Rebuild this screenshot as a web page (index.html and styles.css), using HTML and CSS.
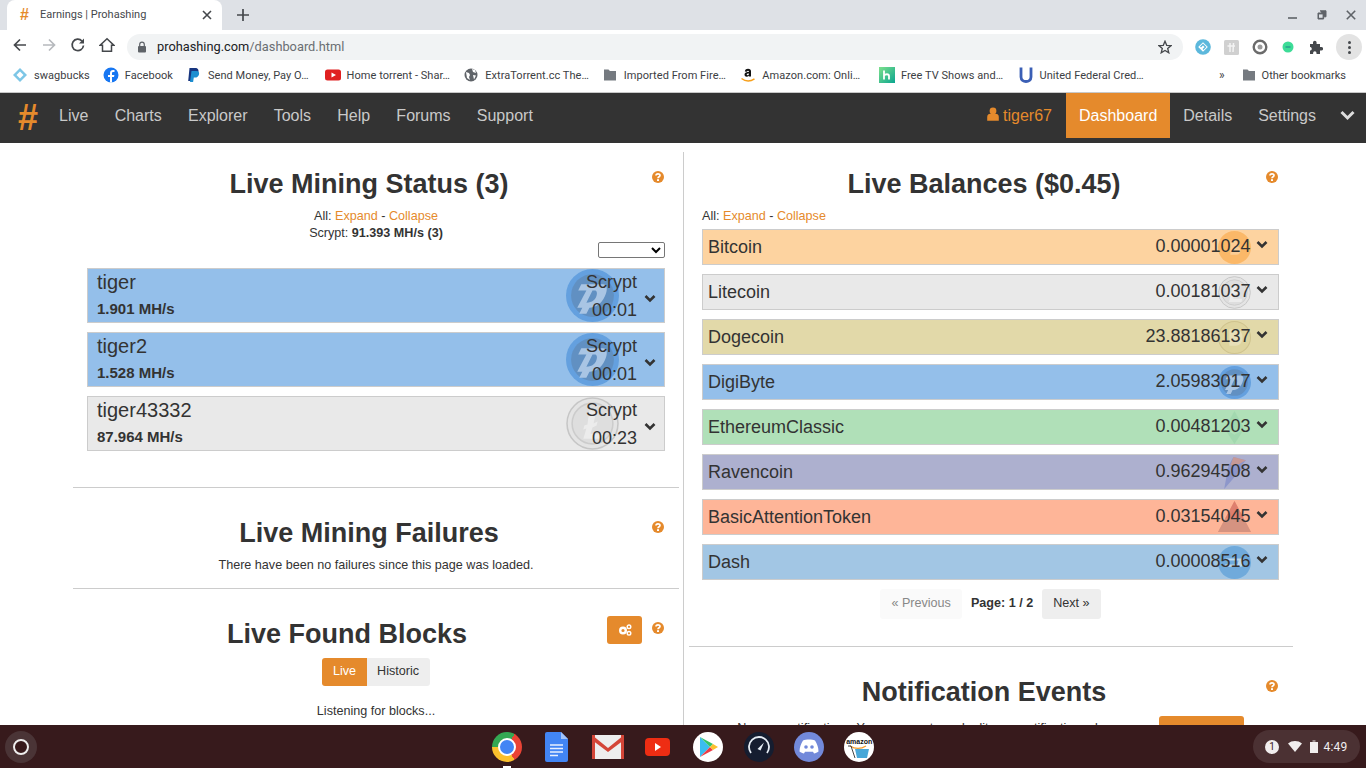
FILE: index.html
```html
<!DOCTYPE html>
<html lang="en">
<head>
<meta charset="utf-8">
<title>Earnings | Prohashing</title>
<link rel="stylesheet" href="styles.css">
</head>
<body>
<svg class="defs" width="0" height="0" aria-hidden="true">
  <symbol id="help" viewBox="0 0 12 12"><circle cx="6" cy="6" r="6" fill="#e58a2c"/><path d="M4 4.600C4 2.400 8 2.400 8 4.400 8 5.800 6 5.600 6 7.200" fill="none" stroke="#fff" stroke-width="1.700"/><rect x="5" y="8.200" width="2" height="1.800" fill="#fff"/></symbol>
  <symbol id="chev" viewBox="0 0 12 9"><path d="M1.500 2 6 6.500 10.500 2" fill="none" stroke="#333" stroke-width="2.600"/></symbol>
  <symbol id="dgb" viewBox="0 0 52 52"><circle cx="26" cy="26" r="26" fill="#3d86d6" fill-opacity=".55"/><circle cx="26" cy="26" r="21" fill="#5d7fa6" fill-opacity=".5"/><path d="M15 15h21c5 0 5 6 2 12-3 7-9 11-15 11l-3 6h-7l3-6h-5l9-17h6l-6 12c6 0 9-3 10-7 1-3 0-5-2-5H12z" fill="#c8dcf2" fill-opacity=".7"/></symbol>
  <symbol id="ltc" viewBox="0 0 52 52"><circle cx="26" cy="26" r="25" fill="#e4e4e4" stroke="#c6c6c6" stroke-width="1.500"/><circle cx="26" cy="26" r="20" fill="#dedede" stroke="#cccccc" stroke-width="1.500"/><path d="M23 13h7l-3 13 4-2-1 4-4 2-2 6h14l-1 5H17l3-10-3 1 1-4 3-1z" fill="#ececec"/></symbol>
  <symbol id="file" viewBox="0 0 16 16"><path d="M2 2.500h4.500L8 4h6v9.500H2z" fill="#757a80"/></symbol>
</svg>

<header class="tabstrip">
  <div class="tab">
    <span class="tab-fav">#</span>
    <span class="tab-title">Earnings | Prohashing</span>
    <svg class="tab-x" width="10" height="10" viewBox="0 0 10 10"><path d="M1 1l8 8M9 1l-8 8" stroke="#45484c" stroke-width="1.600"/></svg>
  </div>
  <svg class="newtab" width="12" height="12" viewBox="0 0 12 12"><path d="M6 0v12M0 6h12" stroke="#45484c" stroke-width="1.700"/></svg>
  <div class="winctl">
    <svg width="10" height="10" viewBox="0 0 10 10"><path d="M0 8h9" stroke="#5f6368" stroke-width="1.600"/></svg>
    <svg width="10" height="10" viewBox="0 0 10 10"><path d="M3 .8h6v6H7M1 3h5.600v6H1z" fill="#5f6368" stroke="#5f6368"/><rect x="2" y="4.400" width="3.600" height="3.400" fill="#dee1e6"/></svg>
    <svg width="10" height="10" viewBox="0 0 10 10"><path d="M.8.8l8.400 8.400M9.200.8L.8 9.200" stroke="#5f6368" stroke-width="1.600"/></svg>
  </div>
</header>

<div class="toolbar">
  <svg class="tb-ic" width="16" height="16" viewBox="0 0 16 16"><path d="M14 8H3M8 2.500 2.500 8 8 13.500" fill="none" stroke="#45484c" stroke-width="1.700"/></svg>
  <svg class="tb-ic" width="16" height="16" viewBox="0 0 16 16"><path d="M2 8h11M8 2.500 13.500 8 8 13.500" fill="none" stroke="#b6b9bd" stroke-width="1.700"/></svg>
  <svg class="tb-ic" width="16" height="16" viewBox="0 0 16 16"><path d="M13.500 8.500A5.700 5.700 0 1 1 12 4" fill="none" stroke="#45484c" stroke-width="1.700"/><path d="M14 1.500v5h-5z" fill="#45484c"/></svg>
  <svg class="tb-ic" width="16" height="16" viewBox="0 0 16 16"><path d="M8 1.800 1.200 8.200h2.300v6h9v-6h2.300z" fill="none" stroke="#45484c" stroke-width="1.500"/></svg>
  <div class="omnibox">
    <svg width="10" height="12" viewBox="0 0 10 12"><path d="M2.700 5V3.500a2.300 2.300 0 0 1 4.600 0V5" fill="none" stroke="#5f6368" stroke-width="1.200"/><rect x="1" y="5" width="8" height="6.500" rx="1" fill="#5f6368"/></svg>
    <span class="url"><span class="url-host">prohashing.com</span>/dashboard.html</span>
    <svg class="star" width="14" height="14" viewBox="0 0 14 14"><path d="M7 1.200 8.700 5.300l4.400.3-3.400 2.900 1.100 4.300L7 10.500l-3.800 2.300 1.100-4.300L.9 5.600l4.400-.3z" fill="none" stroke="#45484c" stroke-width="1.300"/></svg>
  </div>
  <div class="exts">
    <svg width="16" height="16" viewBox="0 0 16 16"><circle cx="8" cy="8" r="7.800" fill="#5cb8dc"/><path d="M8 3.200l4.800 4.800L8 12.800 3.200 8z" fill="#fff"/><path d="M5.500 8L8 5.500 10.500 8 8 10.500" fill="none" stroke="#5cb8dc" stroke-width="1.400"/></svg>
    <svg width="15" height="15" viewBox="0 0 15 15"><rect width="15" height="15" rx="1.500" fill="#d0d0d0"/><path d="M6 3v9M3.500 6H11M9.500 3 9 12" stroke="#f4f4f4" stroke-width="1.500" fill="none"/></svg>
    <svg width="16" height="16" viewBox="0 0 16 16"><circle cx="8" cy="8" r="6.300" fill="none" stroke="#6b6b6b" stroke-width="2.400"/><circle cx="8" cy="8" r="2.500" fill="#9a9a9a"/></svg>
    <svg width="12" height="12" viewBox="0 0 12 12"><circle cx="6" cy="6" r="5.500" fill="#3ddc97"/><path d="M3.500 6h5" stroke="#2a9d8f" stroke-width="1.500"/></svg>
    <svg width="14" height="14" viewBox="0 0 14 14"><path d="M1 4h3V2.500a1.800 1.800 0 0 1 3.600 0V4h3.400v3h1.300a1.800 1.800 0 0 1 0 3.600H11V14H7.500v-1a1.700 1.700 0 0 0-3.400 0v1H1v-3.400h.5a1.900 1.900 0 0 0 0-3.600H1z" fill="#45484c"/></svg>
    <span class="menu-btn"><i></i><i></i><i></i></span>
  </div>
</div>

<nav class="bookmarks">
  <a class="bm"><svg width="16" height="16" viewBox="0 0 16 16"><path d="M8 1l7 7-7 7-7-7z" fill="#7dc6e6"/><path d="M8 4.500 11.500 8 8 11.500 4.500 8z" fill="#fff"/></svg><span>swagbucks</span></a>
  <a class="bm"><svg width="16" height="16" viewBox="0 0 16 16"><circle cx="8" cy="8" r="7.500" fill="#1877f2"/><path d="M7 15.500V10H5V8h2V6c0-2 1.200-3 3-3h1.500v2H10.300C9.500 5 9 5.400 9 6.200V8h2.400L11 10H9v5.500z" fill="#fff"/></svg><span>Facebook</span></a>
  <a class="bm"><svg width="16" height="16" viewBox="0 0 16 16"><path d="M3.500 1H9c3 0 4 2 3.300 4.200C11.700 7.400 10 8.500 8 8.500H6.500L5.700 14H2.200z" fill="#17357f"/><path d="M5.500 4h5c2.200 0 3 1.400 2.500 3.400C12.500 9.400 11 10.500 9 10.500H7.800L7.100 15H4z" fill="#1c8ed0"/></svg><span class="trunc">Send Money, Pay O…</span></a>
  <a class="bm"><svg width="16" height="16" viewBox="0 0 16 16"><rect y="2.500" width="16" height="11" rx="2.500" fill="#e02020"/><path d="M6.500 5.500 11 8l-4.500 2.500z" fill="#fff"/></svg><span class="trunc">Home torrent - Shar…</span></a>
  <a class="bm"><svg width="16" height="16" viewBox="0 0 16 16"><circle cx="8" cy="8" r="6.500" fill="#5f6368"/><path d="M3 5l3 1 1 2-1 2 1 3-3-2zM9 2l3 1 1 3-3-1zM10 8l3 .5-2 4z" fill="#fff"/></svg><span class="trunc">ExtraTorrent.cc The…</span></a>
  <a class="bm"><svg width="16" height="16"><use href="#file"/></svg><span class="trunc">Imported From Fire…</span></a>
  <a class="bm"><svg width="16" height="16" viewBox="0 0 16 16"><path d="M1.500 11.500c4 3 9 3 13 .3" fill="none" stroke="#f7a01c" stroke-width="1.500"/><path d="M4.800 4.500C5 2.500 6.500 1.800 8 1.800c2 0 3 1 3 2.600V9.500H8.900V8.700C7.500 10.300 4.500 10 4.500 7.500 4.500 5.500 6.800 5 8.900 5V4.500C8.900 3.500 7.200 3.300 6.900 4.700zM8.900 6.400C7.600 6.400 6.700 6.700 6.700 7.500 6.700 8.600 8.900 8.500 8.900 6.900z" fill="#111"/></svg><span class="trunc">Amazon.com: Onli…</span></a>
  <a class="bm"><svg width="16" height="16" viewBox="0 0 16 16"><defs><linearGradient id="hg" x1="0" y1="0" x2="1" y2="1"><stop offset="0" stop-color="#7de08c"/><stop offset="1" stop-color="#0aa58f"/></linearGradient></defs><rect width="16" height="16" fill="url(#hg)"/><path d="M5 3.500v9M5 8.500c1-1.500 5-2 5 .5v3.500" fill="none" stroke="#fff" stroke-width="1.800"/></svg><span class="trunc">Free TV Shows and…</span></a>
  <a class="bm"><svg width="16" height="16" viewBox="0 0 16 16"><path d="M3 .5v9.500c0 6 10 6 10 0V.5" fill="none" stroke="#3b5fb5" stroke-width="2.800"/></svg><span class="trunc">United Federal Cred…</span></a>
  <div class="bm-end">
    <span class="more">»</span>
    <a class="bm bm-plain"><svg width="16" height="16"><use href="#file"/></svg><span>Other bookmarks</span></a>
  </div>
</nav>

<nav class="site-nav">
  <span class="logo">#</span>
  <a>Live</a><a>Charts</a><a>Explorer</a><a>Tools</a><a>Help</a><a>Forums</a><a>Support</a>
  <div class="nav-right">
    <a class="user"><svg width="12" height="14" viewBox="0 0 12 14"><circle cx="6" cy="4" r="3.400" fill="#e58a2c"/><path d="M.2 13.800V10c0-2 1.500-3.200 3-3.200h5.600c1.500 0 3 1.200 3 3.200v3.800z" fill="#e58a2c"/></svg> tiger67</a>
    <a class="active">Dashboard</a>
    <a>Details</a>
    <a>Settings</a>
    <svg class="nav-chev" width="15" height="11" viewBox="0 0 15 11"><path d="M1.500 2 7.500 8l6-6" fill="none" stroke="#ddd" stroke-width="3"/></svg>
  </div>
</nav>

<main class="page">
  <section class="col col-left">
    <div class="block">
      <svg class="help"><use href="#help"/></svg>
      <h2>Live Mining Status (3)</h2>
      <p class="meta">All: <a>Expand</a> - <a>Collapse</a></p>
      <p class="meta">Scrypt: <b>91.393 MH/s (3)</b></p>
      <div class="select-row"><select class="algo"><option></option></select></div>
      <div class="rows miners">
        <div class="miner c-dgb">
          <svg class="coin-lg"><use href="#dgb"/></svg>
          <div><div class="m-name">tiger</div><div class="m-rate">1.901 MH/s</div></div>
          <div class="m-right"><div>Scrypt</div><div>00:01</div></div>
          <svg class="chev"><use href="#chev"/></svg>
        </div>
        <div class="miner c-dgb">
          <svg class="coin-lg"><use href="#dgb"/></svg>
          <div><div class="m-name">tiger2</div><div class="m-rate">1.528 MH/s</div></div>
          <div class="m-right"><div>Scrypt</div><div>00:01</div></div>
          <svg class="chev"><use href="#chev"/></svg>
        </div>
        <div class="miner c-ltc">
          <svg class="coin-lg"><use href="#ltc"/></svg>
          <div><div class="m-name">tiger43332</div><div class="m-rate">87.964 MH/s</div></div>
          <div class="m-right"><div>Scrypt</div><div>00:23</div></div>
          <svg class="chev"><use href="#chev"/></svg>
        </div>
      </div>
    </div>
    <hr class="rule rule-a">
    <div class="block block-fail">
      <svg class="help"><use href="#help"/></svg>
      <h2>Live Mining Failures</h2>
      <p class="meta fail-text">There have been no failures since this page was loaded.</p>
    </div>
    <hr class="rule rule-b">
    <div class="block block-found">
      <button class="gear-btn"><svg width="14" height="12" viewBox="0 0 14 12"><circle cx="5" cy="6.500" r="2.800" fill="none" stroke="#fff" stroke-width="2.400"/><circle cx="11" cy="2.800" r="1.800" fill="none" stroke="#fff" stroke-width="1.400"/><circle cx="11" cy="9.300" r="1.800" fill="none" stroke="#fff" stroke-width="1.400"/></svg></button>
      <svg class="help"><use href="#help"/></svg>
      <h2 class="found-title">Live Found Blocks</h2>
      <div class="seg"><span class="seg-on">Live</span><span class="seg-off">Historic</span></div>
      <p class="meta listen">Listening for blocks...</p>
    </div>
  </section>

  <section class="col col-right">
    <div class="block">
      <svg class="help"><use href="#help"/></svg>
      <h2>Live Balances ($0.45)</h2>
      <p class="meta meta-left">All: <a>Expand</a> - <a>Collapse</a></p>
      <div class="rows balances">
        <div class="bal c-btc"><span>Bitcoin</span><span class="coin-sm"><svg viewBox="0 0 32 32"><circle cx="16" cy="16" r="16" fill="#f7931a" fill-opacity=".42"/><path d="M12 9h6c4 0 4 6 0 6 5 0 5 8 0 8h-6z" fill="#fff" fill-opacity=".3"/></svg></span><span class="val">0.00001024</span><svg class="chev"><use href="#chev"/></svg></div>
        <div class="bal c-ltc"><span>Litecoin</span><span class="coin-sm"><svg viewBox="0 0 52 52"><use href="#ltc"/></svg></span><span class="val">0.00181037</span><svg class="chev"><use href="#chev"/></svg></div>
        <div class="bal c-doge"><span>Dogecoin</span><span class="coin-sm"><svg viewBox="0 0 32 32"><circle cx="16" cy="16" r="15.500" fill="#ded49f" stroke="#cfc38e"/><path d="M11 8h6c9 0 9 16 0 16h-6z" fill="#e8dfb8"/></svg></span><span class="val">23.88186137</span><svg class="chev"><use href="#chev"/></svg></div>
        <div class="bal c-dgb"><span>DigiByte</span><span class="coin-sm"><svg viewBox="0 0 52 52"><use href="#dgb"/></svg></span><span class="val">2.05983017</span><svg class="chev"><use href="#chev"/></svg></div>
        <div class="bal c-etc"><span>EthereumClassic</span><span class="coin-sm"><svg viewBox="0 0 32 32"><path d="M16 0l9 16-9 5-9-5zM7 18l9 5 9-5-9 14z" fill="#9fd6ac" fill-opacity=".8"/></svg></span><span class="val">0.00481203</span><svg class="chev"><use href="#chev"/></svg></div>
        <div class="bal c-rvn"><span>Ravencoin</span><span class="coin-sm"><svg viewBox="0 0 32 32"><path d="M15 1l12 3-4 5 3 2-7 6-13 15 4-22z" fill="#7f8cc8" fill-opacity=".7"/><path d="M15 1l12 3-7 4-8 1z" fill="#d99a86" fill-opacity=".75"/></svg></span><span class="val">0.96294508</span><svg class="chev"><use href="#chev"/></svg></div>
        <div class="bal c-bat"><span>BasicAttentionToken</span><span class="coin-sm"><svg viewBox="0 0 32 32"><path d="M16 0 32 30H0z" fill="#ec9a76"/><path d="M16 0 25 17H7z" fill="#de7f6e"/><path d="M7 17h18l7 13H0z" fill="#cf9184" fill-opacity=".8"/></svg></span><span class="val">0.03154045</span><svg class="chev"><use href="#chev"/></svg></div>
        <div class="bal c-dash"><span>Dash</span><span class="coin-sm"><svg viewBox="0 0 32 32"><circle cx="16" cy="16" r="16" fill="#4f97d6" fill-opacity=".6"/><path d="M8 12h17l-2 8H6l1-2h12l1-4H7z" fill="#dce9f4" fill-opacity=".7"/></svg></span><span class="val">0.00008516</span><svg class="chev"><use href="#chev"/></svg></div>
      </div>
      <div class="pager"><span class="pg-btn pg-off">« Previous</span><b>Page: 1 / 2</b><span class="pg-btn">Next »</span></div>
    </div>
    <hr class="rule rule-c">
    <div class="block block-notif">
      <svg class="help"><use href="#help"/></svg>
      <h2>Notification Events</h2>
      <div class="notif-row"><p class="meta">No new notifications. You can create and edit your notification rules</p><button class="notif-btn">Add rule</button></div>
    </div>
  </section>
</main>

<footer class="shelf">
  <span class="launcher"></span>
  <div class="shelf-apps">
    <span class="app app-chrome"><span class="chrome-dot"></span><i class="active-dot"></i></span>
    <svg class="app" width="30" height="30" viewBox="0 0 30 30"><path d="M5 0h14l7 7v21a2 2 0 0 1-2 2H5a2 2 0 0 1-2-2V2a2 2 0 0 1 2-2z" fill="#4285f4"/><path d="M19 0l7 7h-7z" fill="#a1c2fa"/><path d="M8 13h13M8 16.500h13M8 20h13M8 23.500h8" stroke="#e8f0fe" stroke-width="1.400"/></svg>
    <svg class="app" width="32" height="30" viewBox="0 0 32 30"><rect y="3" width="32" height="24" rx="2" fill="#eeeeee"/><path d="M0 3h3v24H0zM29 3h3v24h-3z" fill="#d44638"/><path d="M0 3l16 13L32 3v5L16 20 0 8z" fill="#d44638"/></svg>
    <svg class="app" width="26" height="30" viewBox="0 0 26 30"><rect y="6" width="25" height="18" rx="4" fill="#ee2d13"/><path d="M10 11l6 4-6 4z" fill="#fff"/></svg>
    <span class="app app-round app-white"><svg width="20" height="22" viewBox="0 0 20 22"><path d="M2 1l10 10L2 21z" fill="#3bbdf0"/><path d="M2 1l13 7-3 3z" fill="#34c46a"/><path d="M2 21l13-7-3-3z" fill="#ee3b45"/><path d="M15 8l5 3-5 3-3-3z" fill="#fbc02d"/></svg></span>
    <span class="app app-round app-navy"><svg width="22" height="22" viewBox="0 0 22 22"><path d="M3 17A10 10 0 1 1 19 17" fill="none" stroke="#e6edf5" stroke-width="1.800"/><path d="M9.500 13 16 6.500 12.500 14.500z" fill="#e6edf5"/></svg></span>
    <span class="app app-round app-discord"><svg width="20" height="15" viewBox="0 0 20 15"><path d="M4 1.500C7 .3 13 .3 16 1.500c2 3 3.500 7 3.500 11-1.500 1-3 1.800-4.500 2l-1-1.800H6L5 14.500c-1.500-.2-3-1-4.500-2C.5 8.500 2 4.500 4 1.500z" fill="#fff"/><circle cx="7" cy="8" r="1.800" fill="#7289da"/><circle cx="13" cy="8" r="1.800" fill="#7289da"/></svg></span>
    <span class="app app-round app-white app-amazon"><span class="amz">amazon</span><svg width="24" height="14" viewBox="0 0 24 14"><path d="M3 1c5 3 11 3 16 0" fill="none" stroke="#f39c2c" stroke-width="1.300"/><path d="M8 4h14l-2 9H10z" fill="#48a7d8"/><path d="M1 1h3l4 12" fill="none" stroke="#444" stroke-width="1"/></svg></span>
  </div>
  <div class="tray">
    <span class="tray-badge">1</span>
    <svg width="14" height="11" viewBox="0 0 14 11"><path d="M0 2.500C4-.8 10-.8 14 2.500L7 11z" fill="#f1eeee"/></svg>
    <svg width="8" height="13" viewBox="0 0 8 13"><rect x="2.500" width="3" height="2" fill="#9a8a8a"/><rect y="2" width="8" height="11" fill="#f1eeee"/></svg>
    <span class="clock">4:49</span>
  </div>
</footer>
</body>
</html>
```
FILE: styles.css
```css
* { box-sizing: border-box; }
html, body { margin: 0; height: 768px; overflow: hidden; }
body {
  display: flex;
  flex-direction: column;
  width: 1366px;
  background: #fff;
  font-family: "Liberation Sans", Arial, sans-serif;
  color: #333;
}
.defs { position: absolute; }
a { color: inherit; text-decoration: none; }
p { margin: 0; }

/* browser chrome */
.tabstrip {
  flex: none;
  height: 30px;
  background: #dee1e6;
  display: flex;
  align-items: center;
  font-family: Roboto, sans-serif;
  padding-left: 7px;
}
.tab {
  width: 215px;
  height: 30px;
  background: #fff;
  border-radius: 8px 8px 0 0;
  display: flex;
  align-items: center;
  padding: 0 10px 1px 13px;
}
.tab-fav { color: #e58a2c; font: 700 16px "Liberation Sans", sans-serif; width: 20px; }
.tab-title { font-size: 11px; color: #45484c; flex: 1; }
.newtab { margin-left: 15px; }
.winctl { margin-left: auto; display: flex; gap: 19px; padding-right: 10px; align-items: center; }
.toolbar {
  flex: none;
  height: 30px;
  display: flex;
  align-items: center;
  padding-left: 12px;
  font-family: Roboto, sans-serif;
}
.tb-ic { margin-right: 13px; }
.tb-ic:nth-child(4) { margin-right: 12px; }
.omnibox {
  width: 1056px;
  height: 26px;
  margin-top: 4px;
  border-radius: 13px;
  background: #f1f3f4;
  display: flex;
  align-items: center;
  padding: 0 11px 0 10px;
  gap: 10px;
}
.url { font-size: 12.800px; color: #6a6e72; padding-bottom: 1px; }
.url-host { color: #202124; }
.star { margin-left: auto; }
.exts { display: flex; align-items: center; gap: 13px; margin-left: 12px; margin-top: 4px; }
.exts svg:nth-child(4) { margin: 0 2px 0 1px; }
.menu-btn {
  width: 26px;
  height: 26px;
  border-radius: 50%;
  background: #e3e3e3;
  display: flex;
  flex-direction: column;
  align-items: center;
  justify-content: center;
  gap: 2px;
}
.menu-btn i { width: 3px; height: 3px; border-radius: 50%; background: #45484c; }
.bookmarks {
  flex: none;
  height: 33px;
  border-bottom: 1px solid #c8c8c8;
  display: flex;
  align-items: center;
  padding: 0 0 2px 12px;
  gap: 13px;
  font: 11px Roboto, sans-serif;
  color: #3c4043;
}
.bm { display: flex; align-items: center; gap: 6px; white-space: nowrap; letter-spacing: .05px; }
.bm span.trunc { flex: none; width: 103.600px; letter-spacing: .05px; }
.bm-end { margin-left: auto; display: flex; align-items: center; gap: 13px; padding-right: 20px; }
.bm-plain { letter-spacing: 0; gap: 5px; }
.more { font-size: 12px; margin-right: 3px; }

/* site nav */
.site-nav {
  flex: none;
  height: 50px;
  background: #333;
  display: flex;
  align-items: flex-start;
  padding-left: 18px;
  font-size: 16px;
  color: #c9c9c9;
}
.site-nav a { display: block; padding: 0 13.100px; line-height: 45px; }
.logo { color: #e58a2c; font-weight: 700; font-size: 36px; line-height: 50px; width: 28px; }
.nav-right { margin-left: auto; display: flex; align-items: flex-start; }
.nav-right a { padding: 0 13px; }
.site-nav .user { color: #e58a2c; padding-right: 14px; }
.site-nav .active { background: #e58a2c; color: #fff; }
.nav-chev { margin: 17px 11px 0 11px; }

/* page */
.page {
  flex: 1;
  min-height: 0;
  overflow: hidden;
  display: flex;
  padding-top: 9px;
}
.col { height: 700px; }
.col-left { width: 684px; border-right: 1px solid #ccc; padding: 0 4px 0 73px; }
.col-right { width: 682px; padding: 0 73px 0 5px; }
.block { position: relative; padding-top: 16px; }
h2 { margin: 0; font-size: 27px; line-height: 32px; font-weight: 700; text-align: center; padding-right: 14px; color: #333; }
.help { position: absolute; top: 19px; right: 15px; width: 12px; height: 12px; }
.meta { font-size: 12.600px; line-height: 17px; text-align: center; color: #333; }
.meta a { color: #e58a2c; }
.col-left .block > h2 + .meta { margin-top: 8px; }
.select-row { display: flex; justify-content: flex-end; padding-right: 14px; }
.algo { width: 67px; height: 16px; background: #fff; border: 1px solid #767676; border-radius: 2px; }
.rows { display: flex; flex-direction: column; gap: 9px; margin-left: 14px; margin-right: 14px; }
.miners { margin-top: 10px; }
.miner {
  position: relative;
  height: 55px;
  border: 1px solid #ccc;
  display: flex;
  padding-left: 9px;
}
.m-name { font-size: 20px; line-height: 26px; }
.m-rate { font-size: 15px; line-height: 27px; font-weight: 700; }
.m-right { margin-left: auto; margin-right: 27px; text-align: right; font-size: 18px; line-height: 28px; position: relative; margin-top: -1px; }
.coin-lg { position: absolute; left: 478px; top: 0; width: 53px; height: 53px; }
.miner .chev { position: absolute; right: 8px; top: 25px; }
.chev { width: 12px; height: 9px; flex: none; }
.c-dgb { background: #94bfea; }
.c-ltc { background: #e9e9e9; }
.c-btc { background: #fdd3a0; }
.c-doge { background: #e2d9a9; }
.c-etc { background: #b0e0b8; }
.c-rvn { background: #adb0cf; }
.c-bat { background: #feb598; }
.c-dash { background: #a2c6e4; }
.rule { border: 0; border-top: 1px solid #ccc; margin: 0; }
.rule-a { margin-top: 36px; }
.block-fail { padding-top: 29px; }
.block-fail .help { top: 33px; }
.fail-text { margin-top: 8px; }
.rule-b { margin-top: 14px; }
.block-found { padding-top: 29px; }
.block-found .help { top: 33px; }
.found-title { padding-right: 58px; }
.gear-btn {
  position: absolute;
  top: 27px;
  right: 37px;
  width: 35px;
  height: 28px;
  border: 0;
  border-radius: 3px;
  background: #e58a2c;
  display: flex;
  align-items: center;
  justify-content: center;
  padding: 0;
}
.seg { display: flex; justify-content: center; margin: 8px 0 0; font-size: 12.600px; line-height: 26px; height: 28px; }
.seg span { display: block; }
.seg-on { background: #e58a2c; color: #fff; padding: 0 10.500px; border-radius: 3px 0 0 3px; }
.seg-off { background: #eee; padding: 0 10.500px; border-radius: 0 3px 3px 0; }
.listen { margin-top: 17px; }

.col-right .rows { margin: 4px 14px 0 13px; }
.meta-left { text-align: left; margin: 8px 0 0 13px; }
.bal {
  position: relative;
  height: 36px;
  border: 1px solid #ccc;
  display: flex;
  align-items: center;
  padding: 0 10px 0 5px;
  font-size: 18px;
}
.bal .val { margin-left: auto; margin-right: 5.500px; position: relative; margin-top: -2px; }
.bal .chev { margin-top: -6px; }
.coin-sm { position: absolute; top: 1px; left: 515px; width: 33px; height: 33px; }
.coin-sm svg { display: block; width: 33px; height: 33px; }
.pager { display: flex; justify-content: center; align-items: flex-start; gap: 9px; margin: 9px 0 0 13px; padding-right: 14px; font-size: 12.600px; height: 30px; }
.pager b { line-height: 29px; }
.pg-btn { display: block; line-height: 28px; height: 30px; padding: 0 11px; background: #eee; border-radius: 3px; }
.pg-off { background: #fafafa; color: #888; }
.rule-c { margin-top: 27px; }
.block-notif { padding-top: 29px; }
.block-notif .help { top: 33px; }
.notif-row { display: flex; justify-content: flex-end; margin: 8px 49px 0 0; gap: 48px; }
.notif-btn { width: 85px; height: 28px; border: 0; border-radius: 3px; background: #e58a2c; color: #fff; font: 700 12.600px "Liberation Sans", sans-serif; }
.notif-row .meta { line-height: 15px; padding-top: 5px; }

/* shelf */
.shelf {
  flex: none;
  height: 43px;
  background: #371a1c;
  display: flex;
  align-items: center;
  font-family: Roboto, sans-serif;
}
.launcher { width: 16px; height: 16px; margin-left: 13px; border: 2px solid #eee; border-radius: 50%; flex: none; box-shadow: 0 0 0 8px #4a3436; }
.shelf-apps { margin-left: 453px; display: grid; grid-template-columns: repeat(8, 50.300px); align-items: center; justify-items: center; }
.app { display: block; }
.app-chrome {
  position: relative;
  width: 30px;
  height: 30px;
  border-radius: 50%;
  background: conic-gradient(from 30deg, #ea4335 0 120deg, #fbc02d 120deg 240deg, #34a853 240deg 360deg);
  display: flex;
  align-items: center;
  justify-content: center;
}
.chrome-dot { width: 14px; height: 14px; border-radius: 50%; background: #4285f4; border: 2px solid #fff; box-sizing: content-box; }
.active-dot { position: absolute; bottom: -6px; left: 11px; width: 8px; height: 2px; background: #fff; }
.app-round { width: 30px; height: 30px; border-radius: 50%; display: flex; align-items: center; justify-content: center; }
.app-white { background: #fff; }
.app-navy { background: #151d30; }
.app-discord { background: #7289da; }
.app-amazon { flex-direction: column; overflow: hidden; }
.amz { font: 700 7px "Liberation Sans", sans-serif; color: #111; line-height: 7px; margin-top: 3px; }
.tray {
  margin-left: auto;
  margin-right: 6px;
  width: 107px;
  height: 33px;
  border-radius: 17px;
  background: #4b3133;
  display: flex;
  align-items: center;
  padding-left: 12px;
  gap: 8.500px;
  color: #f1eeee;
  font-size: 12px;
}
.tray-badge { width: 14px; height: 14px; border-radius: 50%; background: #f1eeee; color: #371a1c; font-size: 10px; line-height: 14px; text-align: center; }
.clock { margin-left: -3px; letter-spacing: .2px; }
```
